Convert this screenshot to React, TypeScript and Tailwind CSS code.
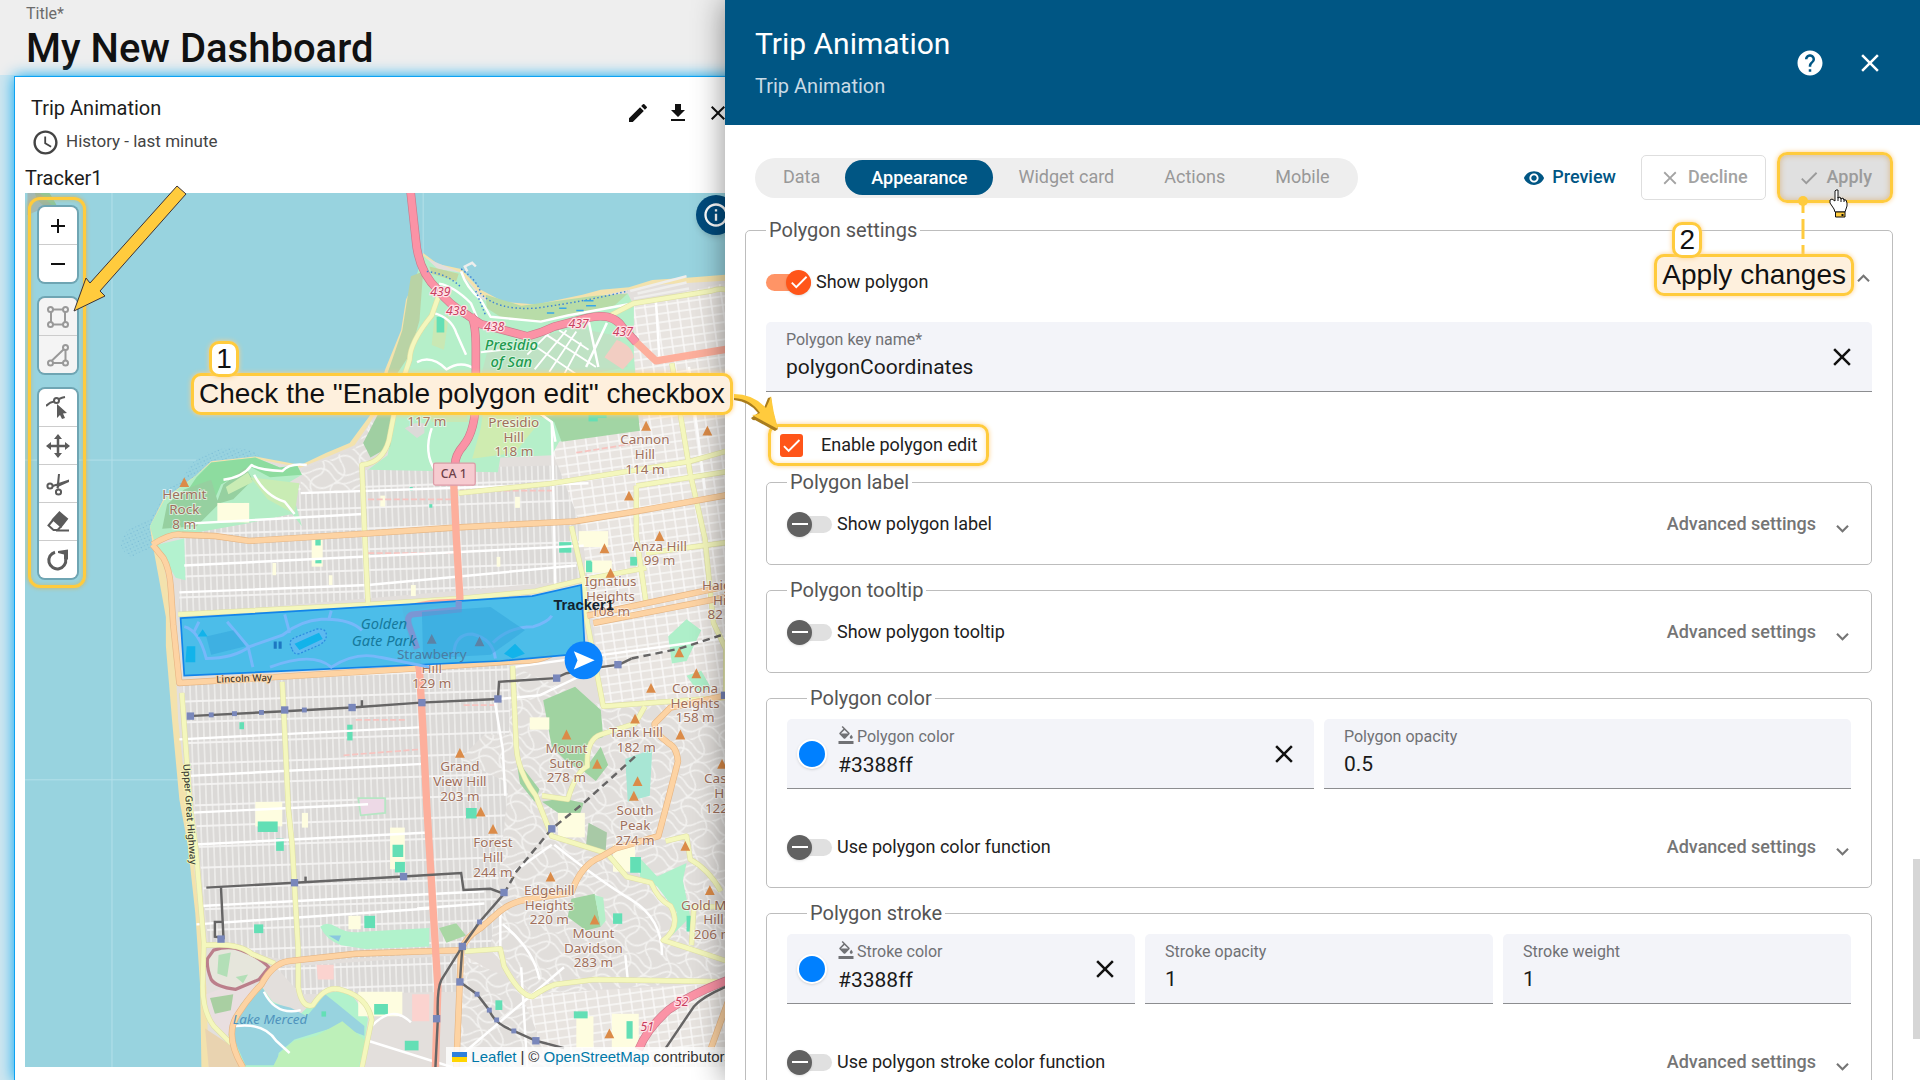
import type { ReactNode } from "react";
import { clsx } from "clsx";
import {
    MdAccessTime,
    MdCheck,
    MdClose,
    MdEdit,
    MdExpandLess,
    MdExpandMore,
    MdFileDownload,
    MdFormatColorFill,
    MdHelp,
    MdInfoOutline,
    MdRemoveRedEye,
} from "react-icons/md";

/* ── Map data ── */

type MapLabel = { x: number; y: number; lines: string[] };

const HILLS: MapLabel[] = [
    { x: 150, y: 408, lines: ["Hermit", "Rock", "8 m"] },
    { x: 348, y: 348, lines: ["117 m"] },
    { x: 419, y: 349, lines: ["Presidio", "Hill", "118 m"] },
    { x: 526, y: 363, lines: ["Cannon", "Hill", "114 m"] },
    { x: 538, y: 450, lines: ["Anza Hill", "99 m"] },
    { x: 498, y: 479, lines: ["Ignatius", "Heights", "108 m"] },
    { x: 352, y: 538, lines: ["Strawberry", "Hill", "129 m"] },
    { x: 567, y: 566, lines: ["Corona", "Heights", "158 m"] },
    { x: 519, y: 602, lines: ["Tank Hill", "182 m"] },
    { x: 462, y: 615, lines: ["Mount", "Sutro", "278 m"] },
    { x: 375, y: 630, lines: ["Grand", "View Hill", "203 m"] },
    { x: 591, y: 640, lines: ["Castro", "Hill", "122 m"] },
    { x: 518, y: 666, lines: ["South", "Peak", "274 m"] },
    { x: 402, y: 692, lines: ["Forest", "Hill", "244 m"] },
    { x: 448, y: 731, lines: ["Edgehill", "Heights", "220 m"] },
    { x: 484, y: 766, lines: ["Mount", "Davidson", "283 m"] },
    { x: 582, y: 743, lines: ["Gold Mine", "Hill", "206 m"] },
    { x: 590, y: 482, lines: ["Haight", "Hill", "82 m"] },
];

const PEAKS = [
    [150, 394], [527, 348], [577, 352], [513, 405], [493, 448], [498, 468], [538, 438],
    [554, 533], [568, 550], [531, 562], [518, 587], [555, 600],
    [462, 600], [487, 624], [375, 615], [520, 638], [517, 650], [589, 624], [392, 663],
    [402, 677], [449, 716], [485, 751], [559, 691], [579, 727], [497, 844],
];

const STATIONS = [
    [155, 585], [232, 580], [287, 578], [344, 574], [406, 571], [454, 554], [504, 543],
    [240, 721], [329, 716], [411, 729], [180, 767], [377, 773], [375, 802], [356, 832],
    [437, 850], [450, 677], [591, 568],
];

const STOPS = [
    [172, 584], [191, 583], [213, 582], [248, 580], [391, 753], [389, 812], [399, 825],
    [405, 833], [419, 842],
];

const SCHOOLS = [
    [257, 440, 7, 8], [257, 456, 8, 6], [334, 398, 4, 4], [350, 412, 4, 4], [456, 443, 16, 12],
    [478, 459, 8, 12], [514, 455, 9, 10], [486, 336, 14, 8], [210, 671, 26, 12], [225, 685, 10, 14],
    [320, 690, 14, 14], [322, 704, 13, 12], [207, 755, 12, 10], [297, 748, 14, 14], [305, 820, 18, 12],
    [330, 850, 18, 11], [468, 826, 18, 8], [511, 834, 8, 20], [404, 817, 9, 11], [514, 700, 14, 18],
    [500, 746, 12, 12], [380, 660, 14, 12], [283, 592, 7, 18], [195, 590, 6, 8], [560, 748, 8, 18],
    [356, 259, 10, 18], [480, 338, 12, 9], [262, 826, 6, 6], [478, 458, 7, 12],
];

const YELLOW_BLOCKS = [
    [177, 411, 26, 16], [254, 441, 9, 22], [472, 434, 24, 13], [477, 458, 22, 10], [208, 655, 22, 20],
    [318, 676, 12, 34], [284, 748, 10, 11], [292, 810, 36, 20], [499, 828, 22, 30], [470, 830, 14, 26],
    [500, 690, 18, 22], [432, 586, 16, 10], [455, 664, 22, 20], [246, 664, 5, 12], [310, 405, 4, 9],
    [268, 470, 3, 8], [335, 478, 4, 9], [222, 460, 3, 10], [420, 406, 4, 9], [405, 455, 3, 8],
];

const RED_ROADS = [
    "M370 396 L372 438 L375 489 L374 492 L353 493 L331 497 Q334 515 342 547 L345 599 L348 659 L351 708 L355 773 L357 806 L355 872",
    "M517 278 L535 295 L602 284",
];

const PINK_ROADS = [
    "M334 150 L339 196 Q341 222 357 237 Q366 249 380 257 L392 265 L430 275 Q442 272 452 267 L479 260 Q500 255 508 268 L519 280",
    "M384 258 Q388 264 388 285 L388 324 Q388 352 378 364 Q371 372 371 380",
    "M606 796 Q566 810 545 825 Q528 840 521 857",
];

const ORANGE_ROADS = [
    "M124 445 Q140 435 148 437 L175 438 L203 442 L298 436 L372 431 L469 426 L518 418 L602 403",
    "M124 445 L133 456 Q138 465 139 480 L141 510 L146 558 L227 553 L340 546 L421 540 Q442 540 450 534",
    "M479 503 L602 477",
    "M484 509 L602 486",
    "M198 872 Q182 845 194 828 Q203 814 213 804 Q222 787 235 785 L290 779 L376 776",
    "M372 872 L376 776 Q380 765 392 758 L408 744 Q418 736 434 734 L466 729 Q474 706 490 700 L502 693 L537 683 L545 653 L553 622 Q552 610 545 607 Q533 598 534 591 L547 578 L602 566",
    "M596 812 L580 856",
];

const YELLOW_ROADS = [
    "M145 502 L298 494 L376 489 L437 483 L474 474 L527 464",
    "M359 238 L352 258 Q334 280 334 294 L324 324 L317 360 Q312 378 295 380 L297 430 L300 493",
    "M374 403 L450 395 L563 377 L602 366",
    "M519 397 L602 384",
    "M548 297 L563 387 L575 440 L582 509 L592 530 L592 569",
    "M519 397 L519 438 L527 493",
    "M466 430 L476 474 L479 509 L492 577 L602 569",
    "M527 452 L602 442",
    "M230 557 L235 661 L238 689 L243 776 L243 806 Q246 824 255 821 Q266 803 280 809 Q300 815 303 833 L295 872",
    "M148 566 L155 661 L159 689 L166 770 L165 806 Q165 826 174 838 L188 852",
    "M167 772 Q195 770 205 779 L224 787",
    "M379 777 L408 775 L411 789 Q424 813 434 814 Q446 806 453 804 L485 800 L602 802",
    "M418 544 L421 610 Q422 630 437 650 L450 683 L495 697 L511 716 L531 721 Q537 735 547 740 Q556 757 541 768 L566 776 L602 788",
    "M442 650 L463 653 Q470 630 479 626 Q478 604 490 600 L518 591 L526 577",
    "M543 687 L560 683 L563 702 Q578 710 588 728",
    "M602 244 Q594 233 580 238 L517 248 L494 260",
    "M602 740 L566 741 L564 772",
];

const WHITE_ROADS = [
    "M151 428 L296 420", "M245 403 L480 395", "M150 462 L476 446", "M146 484 L300 478 L470 462",
    "M250 380 Q236 378 230 385 Q210 384 205 380 Q198 390 182 392", "M207 388 Q216 405 232 410 L240 420",
    "M407 571 L440 568 L478 550", "M146 604 L345 594", "M150 634 L345 624", "M152 664 L300 657",
    "M155 690 L350 680", "M160 755 L350 742", "M163 740 L395 728", "M340 742 L395 738",
    "M408 775 L408 745", "M403 570 L410 612 L412 650", "M450 345 L453 480",
    "M419 712 L450 690", "M340 296 Q352 290 364 302 Q376 294 388 302", "M354 256 Q368 260 372 272 L380 290",
    "M352 350 Q345 370 355 385", "M452 690 Q490 720 515 735 Q540 750 540 780",
    "M410 755 Q435 775 440 800", "M510 780 L512 800", "M215 810 Q225 830 245 825",
    "M303 838 Q320 820 335 835", "M376 222 Q380 235 392 245 L400 259 L441 263 L463 258 L517 248",
    "M418 545 L602 520", "M370 872 L300 850", "M358 232 Q370 234 384 248 L390 262",
    "M562 300 L575 400", "M453 361 L450 345 L436 335", "M425 790 L430 872", "M378 860 L460 790",
    "M192 838 Q215 835 225 850 L236 860", "M535 246 L538 296", "M480 262 L488 300 M495 264 L478 300",
];

const RAIL = [
    "M153 585 L232 581 L287 578 L343 574 L406 571 L407 557 L453 554 L462 550 L490 545 L505 543 L515 538",
    "M168 725 L240 721 L329 716 L376 713 L378 727 L400 726 L411 730 L391 753 L377 773 L360 800 Q356 808 357 832 L355 872",
    "M180 725 L182 766 L175 765 L175 753 L181 753",
    "M377 773 L375 802 L389 812 L399 825 Q403 836 419 842 L437 850 L460 856",
    "M295 578 L295 572",
    "M249 721 L249 716",
    "M602 802 Q575 812 566 822 L543 856",
];

const TUNNELS = ["M411 730 L421 712 L450 677 L476 656 L518 618", "M515 538 L554 530 L588 519"];

/* ── Map drawing ── */

function MapCanvas() {
    return (
        <svg
            className="absolute inset-0 h-full w-full font-['Noto_Sans','Open_Sans',sans-serif]"
            viewBox="20 158 582 714"
            preserveAspectRatio="xMinYMin slice"
            role="img"
            aria-label="Map of San Francisco"
        >
            <defs>
                <pattern id="avenues" width="5" height="17" patternUnits="userSpaceOnUse" patternTransform="rotate(-2)">
                    <rect width="5" height="17" fill="#f4f3f2" />
                    <rect x="0.5" y="0.8" width="4" height="15.4" fill="#dbd9d7" />
                </pattern>
                <pattern id="blocks" width="9" height="7" patternUnits="userSpaceOnUse" patternTransform="rotate(-8)">
                    <rect width="9" height="7" fill="#faf9f8" />
                    <rect x="0.6" y="0.6" width="7.8" height="5.8" fill="#e8e4e0" />
                </pattern>
                <pattern id="curves" width="34" height="30" patternUnits="userSpaceOnUse" patternTransform="rotate(14)">
                    <rect width="34" height="30" fill="#e1dedb" />
                    <path
                        d="M0 5 Q9 -3 17 5 T34 5 M0 12 Q9 4 17 12 T34 12 M0 20 Q9 28 17 20 T34 20 M0 27 Q9 35 17 27 T34 27 M5 0 Q13 9 5 15 T5 30 M22 0 Q30 8 22 15 T22 30"
                        fill="none"
                        stroke="#f3f2f0"
                        strokeWidth="1.3"
                    />
                </pattern>
                <pattern id="shoal" width="4" height="4" patternUnits="userSpaceOnUse" patternTransform="rotate(20)">
                    <circle cx="1" cy="1" r="0.5" fill="#6db2d2" />
                    <circle cx="3" cy="3" r="0.4" fill="#6db2d2" />
                </pattern>
            </defs>

            {/* Water */}
            <rect x="20" y="150" width="600" height="740" fill="#98d3df" />
            <path d="M91 150 V872 M345 150 V230 M20 376 H160 M20 637 H145" stroke="#b4e0e9" strokeWidth="0.8" />
            <path d="M28 158 H40 L47 170 L40 172 L30 164 Z" fill="#8cc79b" />
            <path d="M22 158 H32 L46 172 L36 170 L22 176 Z" fill="#a9a89c" fillOpacity="0.6" />
            <path d="M158 385 L136 400 L122 425 Q102 428 98 445 Q104 460 112 452 L124 448 L124 425 Z" fill="url(#shoal)" />
            <path d="M150 388 Q162 366 190 366 L205 368 L212 373 L160 392 Z" fill="url(#shoal)" />

            {/* Land */}
            <path
                d="M345 207 L357 216 L376 220 L392 237 L411 247 L437 249 L475 241 L490 237 L513 235 L532 229 L563 227 L602 224 V872 H164 L163 806 L159 746 L153 691 L146 653 L140 588 L135 528 L135 504 L129 471 L124 444 L122 430 L133 408 L159 389 L172 377 L208 373 L245 380 L266 370 L285 362 L305 335 L314 302 L327 270 L331 245 L340 226 Z"
                fill="#f3e2ad"
            />
            <path
                d="M347 211 L376 223 L392 241 L411 252 L475 245 L532 233 L602 229 V872 H170 L168 806 L162 746 L152 653 L145 588 L141 504 L134 465 L128 444 L140 408 L208 375 L245 382 L270 372 L289 364 L309 335 L330 270 Z"
                fill="#e3dfdc"
            />
            <path d="M150 436 L245 396 L300 384 L470 380 L474 474 L145 502 Z" fill="url(#avenues)" />
            <path d="M148 556 L415 542 L418 640 L400 776 L243 786 L170 772 Z" fill="url(#avenues)" />
            <path d="M225 790 L376 780 L375 810 L245 812 Z" fill="url(#avenues)" />
            <path d="M448 362 L525 345 L510 250 L602 229 V572 L492 577 L474 430 Z" fill="url(#blocks)" />
            <path d="M245 384 L290 366 L305 340 L316 370 L296 382 L297 400 L245 404 Z" fill="url(#curves)" />
            <path d="M418 544 L492 577 L602 569 V800 L434 812 L400 776 L415 640 L375 620 L395 600 L415 600 Z" fill="url(#curves)" />
            <path d="M378 780 L434 812 L602 802 V872 H372 Z" fill="url(#blocks)" />
            <path d="M380 785 L420 800 L450 872 L372 872 Z" fill="url(#curves)" />

            {/* Parks and woods */}
            <path
                d="M345 209 L357 220 L376 223 L392 244 L411 253 L437 254 L475 248 L512 240 L517 250 L517 290 L521 345 L456 361 L450 372 L408 374 L406 386 L300 384 L316 372 L325 322 L316 305 L330 270 L333 245 Z"
                fill="#b5efc9"
            />
            <path d="M396 241 L425 250 L484 242 L512 240 L501 250 L463 258 L441 263 L408 259 L397 252 Z" fill="#b8dca8" />
            <path d="M350 218 L374 224 L372 230 L352 224 Z" fill="#c3d7a0" />
            <path d="M335 226 L345 222 L342 262 L334 290 L322 308 L316 305 L328 270 Z" fill="#b9d3a5" />
            <path d="M310 335 L324 318 L318 365 L302 374 L296 362 Z" fill="#a0cfa2" />
            <path d="M440 340 L520 335 L522 352 L458 361 L452 345 Z" fill="#a2d5a4" />
            <path d="M352 345 L382 345 L378 330 L350 330 Z M354 262 L366 258 L362 286 L352 282 Z" fill="#c9e8b4" />
            <path d="M395 330 L440 345 L420 370 L385 375 L392 350 Z" fill="#cfecb0" />
            <path d="M398 285 L432 277 L470 268 L505 275 L512 300 L480 306 L392 308 Z" fill="#bfe2c4" />
            <path d="M430 290 L448 272 M436 302 L462 270 M448 304 L470 271 M460 306 L474 280 M432 280 L470 306 M446 274 L486 300 M456 270 L480 286 M392 288 L430 284" stroke="#fff" strokeWidth="1.5" fill="none" />
            <path d="M503 278 Q515 282 517 292 L508 302 L493 292 Z" fill="#f2cdc2" />
            <path d="M338 346 H346 V354 L340 358 L330 350 Z" fill="#dcdad8" />
            <path
                d="M172 378 L208 374 L228 382 L242 380 L246 388 L236 394 L246 430 L238 420 L200 428 L150 437 L126 444 L122 430 L134 408 L158 390 Z"
                fill="#b3edc6"
            />
            <path d="M172 378 L208 374 L228 382 L242 380 L246 388 L220 390 L205 382 L180 396 L174 410 L150 405 L160 390 Z" fill="#8ddc9f" />
            <path d="M182 396 L200 382 L206 392 L190 408 L176 412 Z M150 400 L172 392 L178 412 L160 430 L132 432 L136 412 Z" fill="#96d0a0" />
            <path d="M204 390 L244 395 L240 420 L218 408 Z M184 398 L202 386 L206 394 L186 404 Z" fill="#c9ecb4" />
            <path d="M124 446 L150 440 L151 474 L143 472 L136 460 Z" fill="#b3f2cf" />
            <path d="M189 411 H199 V427 H189 Z" fill="#8fe0b0" />
            <path d="M443 572 L469 561 L490 580 L492 602 L480 606 L476 631 L462 622 L450 610 Z" fill="#a0d3a1" />
            <path d="M476 630 L490 610 L496 625 L486 638 Z M421 620 L440 645 L436 655 L424 640 Z" fill="#a0d3a1" />
            <path d="M442 655 L458 652 L476 656 L470 674 Z" fill="#9fd0a0" />
            <path d="M545 520 L560 506 L572 515 L560 540 L548 542 Z M560 552 L572 548 L580 562 L570 566 Z" fill="#aeefc9" />
            <path d="M510 620 L532 612 L530 650 L512 655 Z" fill="#a8e6d4" />
            <path d="M466 734 L485 730 L490 757 L478 760 L463 749 Z" fill="#a0d3a1" />
            <path d="M485 731 L492 733 L494 752 L490 757 Z" fill="#b5efc9" />
            <path d="M521 700 L536 716 L560 705 L557 719 L563 749 L544 768 L552 745 L536 724 L522 716 Z" fill="#aef1cb" />
            <path d="M480 672 L495 680 L494 695 L478 690 Z" fill="#a8c9a6" />
            <path d="M261 757 Q266 752 274 757 Q284 763 295 761 L350 758 V773 L298 775 L278 772 Q266 768 261 757 Z" fill="#b1f2cc" />
            <path d="M268 764 L278 764 L276 769 Z" fill="#8ac7e0" />
            <path d="M358 758 L372 754 L380 764 L364 770 Z" fill="#a9d7a4" />
            <path d="M292 652 H314 V664 L294 666 Z" fill="#edd9e6" stroke="#b6e6c4" strokeWidth="1.5" />
            <path d="M258 788 H272 V800 H259 Z M336 812 H350 V834 H336 Z" fill="#fbd3cf" />
            <path d="M168 812 L200 800 L208 806 L192 830 L188 850 L172 835 Z" fill="#e9dfe0" />
            <path d="M171 815 L190 812 L188 825 L175 828 Z" fill="#a9cfa2" />
            <path d="M167 840 L190 855 L196 872 H170 Z" fill="#e9d3b0" />

            {/* Lake Merced and the golf course */}
            <path d="M196 872 L186 845 L196 820 L212 804 L222 818 L245 828 L262 812 L284 808 L300 832 L294 872 Z" fill="#b1f2cc" />
            <path
                d="M214 807 L221 819 L237 823 L250 830 L265 812 L275 820 L297 838 L297 846 L276 838 L256 844 L240 849 L227 860 L226 870 L200 870 L189 845 L196 825 Z"
                fill="#98d3df"
            />
            <path d="M240 850 L258 846 L279 834 L298 850 L292 872 H222 L228 860 Z" fill="#bdf0b9" />
            <path
                d="M174 776 Q187 772 196 776 Q212 782 219 790 L211 800 L192 808 Q176 806 172 800 Q168 790 169 783 Z"
                fill="#e6e6dc"
                stroke="#bb7f8b"
                strokeWidth="2.6"
            />
            <path d="M178 780 L188 778 L185 798 L177 795 Z M192 798 L202 796 L198 803 Z" fill="#b3dfb7" />

            {YELLOW_BLOCKS.map(([x, y, w, h]) => (
                <rect key={`${x}-${y}`} x={x} y={y} width={w} height={h} fill="#fefde0" />
            ))}
            {SCHOOLS.map(([x, y, w, h]) => (
                <rect key={`${x}-${y}`} x={x} y={y} width={w / 1.6} height={h / 1.4} fill="#63dfb5" />
            ))}
            <path d="M300 408 H370 M300 452 H370 M376 401 H450 M470 370 L520 362 M290 588 H330 M378 576 H404 M280 617 L344 612" stroke="#f7c4c0" strokeWidth="1.4" strokeDasharray="5 2" />

            {/* Roads */}
            <g fill="none" strokeLinejoin="round">
                {WHITE_ROADS.map((d) => (
                    <path key={d} d={d} stroke="#ffffff" strokeWidth="2" />
                ))}
                {YELLOW_ROADS.map((d) => (
                    <path key={d} d={d} stroke="#dfe0a4" strokeWidth="4.4" />
                ))}
                {YELLOW_ROADS.map((d) => (
                    <path key={d} d={d} stroke="#f4f7bd" strokeWidth="3.5" />
                ))}
                {ORANGE_ROADS.map((d) => (
                    <path key={d} d={d} stroke="#e6b583" strokeWidth="5.2" />
                ))}
                {ORANGE_ROADS.map((d) => (
                    <path key={d} d={d} stroke="#fdd3a3" strokeWidth="4.2" />
                ))}
                {RED_ROADS.map((d) => (
                    <path key={d} d={d} stroke="#fdaf9c" strokeWidth="6" />
                ))}
                {PINK_ROADS.map((d) => (
                    <path key={d} d={d} stroke="#c9798b" strokeWidth="7" />
                ))}
                {PINK_ROADS.map((d) => (
                    <path key={d} d={d} stroke="#fb93a6" strokeWidth="6" />
                ))}
            </g>
            <path d="M348 222 Q365 224 376 235 M376 220 Q390 230 392 240 Q405 254 437 252 Q480 246 512 238 M388 238 L396 258" fill="none" stroke="#3f83d6" strokeWidth="1.2" strokeDasharray="1.2 2" />
            <path d="M381 222 L379 218 L385 215 L388 218 M514 238 L560 226 M520 240 L560 231 M517 244 L562 236" fill="none" stroke="#efeeec" strokeWidth="2" />
            <path d="M476 246 H484 M478 250 H486 M456 252 H462 M446 256 H452 M470 254 H476" stroke="#39a7e8" strokeWidth="1.2" />

            {/* Rail */}
            <g fill="none" stroke="#666565" strokeWidth="2">
                {RAIL.map((d) => (
                    <path key={d} d={d} />
                ))}
                {TUNNELS.map((d) => (
                    <path key={d} d={d} strokeDasharray="6 4" />
                ))}
            </g>
            {STATIONS.map(([x, y]) => (
                <rect key={`${x}-${y}`} x={x - 3} y={y - 3} width="6" height="6" fill="#7987bb" />
            ))}
            {STOPS.map(([x, y]) => (
                <rect key={`${x}-${y}`} x={x - 2} y={y - 2} width="4" height="4" fill="#7987bb" />
            ))}

            {/* Place names */}
            {PEAKS.map(([x, y]) => (
                <path key={`${x}-${y}`} d={`M${x} ${y - 4} L${x + 4} ${y + 4} H${x - 4} Z`} fill="#db8b48" />
            ))}
            <g fill="#a0705c" fontSize="11" textAnchor="middle" stroke="#ffffff" strokeOpacity="0.6" strokeWidth="1.6" paintOrder="stroke">
                {HILLS.map((hill) =>
                    hill.lines.map((line, i) => (
                        <text key={line + hill.x} x={hill.x} y={hill.y + i * 12}>
                            {line}
                        </text>
                    )),
                )}
            </g>
            <g fill="#229a50" fontSize="12" fontStyle="italic" fontWeight="500" textAnchor="middle" stroke="#d8f5e0" strokeWidth="1.5" paintOrder="stroke">
                <text x="417" y="286">Presidio</text>
                <text x="417" y="300">of San</text>
            </g>
            <g fill="#c8405f" fontSize="10" fontStyle="italic" textAnchor="middle" stroke="#ffe3e8" strokeWidth="2" paintOrder="stroke">
                <text x="359" y="242">439</text>
                <text x="372" y="258">438</text>
                <text x="403" y="271">438</text>
                <text x="472" y="268">437</text>
                <text x="508" y="275">437</text>
                <text x="556" y="822">52</text>
                <text x="528" y="842">51</text>
            </g>
            <rect x="353.500" y="378.500" width="34" height="18" rx="1.500" fill="#f6cbd0" stroke="#dc9aa6" />
            <text x="370" y="391" fontSize="10" fontWeight="500" textAnchor="middle" fill="#6d4048">CA 1</text>
            <text x="220" y="836" fontSize="11" fontStyle="italic" textAnchor="middle" fill="#4f93bd">Lake Merced</text>
            <text x="199" y="557" fontSize="8" fontWeight="500" textAnchor="middle" fill="#45382c" transform="rotate(-2 199 557)" stroke="#fdd9ad" strokeWidth="1.5" paintOrder="stroke">
                Lincoln Way
            </text>
            <text x="148" y="625" fontSize="8" fontWeight="500" fill="#3f3f35" transform="rotate(86 149 625)" stroke="#f4f7bd" strokeWidth="1.5" paintOrder="stroke">
                Upper Great Highway
            </text>

            {/* Tracked polygon */}
            <path
                d="M147 505 L330 494 L434 487 L474 478 L477 532 L463 535 L408 540 L150 552 Z"
                fill="#41bae9"
                fillOpacity="0.93"
                stroke="#1285ea"
                strokeWidth="1.4"
            />
            <g fill="none" stroke="#77b8fa" strokeWidth="2.4">
                <path d="M150 512 Q162 515 168 538 Q190 538 204 528 L230 519 Q245 507 262 506 Q285 505 295 515" />
                <path d="M185 508 L202 528 L206 545 M162 508 L158 516 M232 502 L236 517 M270 499 L268 506" />
                <path d="M220 545 Q255 532 270 545 Q290 532 310 537 L350 545" />
                <path d="M370 536 Q370 518 385 518 Q402 522 404 538 M402 525 Q415 512 435 512 Q447 508 450 503" />
            </g>
            <path d="M374 491 L374 498 L336 502 Q330 504 335 515 L340 530" fill="none" stroke="#7b96d4" strokeWidth="5" />
            <path d="M344 500 L400 496 L428 515 L400 535 L345 538 Z M168 520 L190 515 L200 528 L172 535 Z" fill="#2fa3dc" fillOpacity="0.5" />
            <path d="M238 530 Q234 524 240 521 L258 514 Q266 513 266 519 Q266 524 260 527 L244 534 Q239 535 238 530 Z" fill="#5cb9f0" stroke="#2b8be0" strokeDasharray="1.5 1.5" />
            <path d="M240 526 L260 517 L263 522 L244 531 Z" fill="#12b3ea" />
            <path d="M152 528 H159 V541 H151 Z M411 534 L420 526 L428 534 L418 538 Z M161 520 L165 514 L169 520 Z" fill="#12b3ea" />
            <path d="M223 524 h2.500 v6 h-2.500 z M227 524 h2.500 v6 h-2.500 z" fill="#1d78c2" />
            <path d="M352 518 L356 526 H348 Z M391 520 L395 528 H387 Z" fill="#5c82a5" />
            <g fill="#16799c" fontSize="12" fontStyle="italic" textAnchor="middle">
                <text x="313" y="514">Golden</text>
                <text x="313" y="528">Gate Park</text>
            </g>
            <text x="352" y="538" fontSize="11" textAnchor="middle" fill="#4b7da3">Strawberry</text>

            {/* Tracker marker */}
            <text x="476" y="498" fontSize="12" fontWeight="700" textAnchor="middle" fill="#12222e" className="font-['Liberation_Sans',Arial,sans-serif]">
                Tracker1
            </text>
            <circle cx="476" cy="539.500" r="15.500" fill="#0b83fd" />
            <path d="M468 532 L485 539.500 L468 547 L471 539.500 Z" fill="#ffffff" />
        </svg>
    );
}

/* ── Map toolbar ── */

function ToolGroup({ children }: { children: ReactNode }) {
    return (
        <div className="flex flex-col gap-px overflow-hidden rounded-md bg-[#ccc] ring-2 ring-[#6fa5b3]">
            {children}
        </div>
    );
}

function ToolButton({ label, disabled, children }: { label: string; disabled?: boolean; children: ReactNode }) {
    return (
        <button
            type="button"
            aria-label={label}
            disabled={disabled}
            className={clsx(
                "flex h-[37px] w-[38px] items-center justify-center",
                disabled ? "bg-[#f4f4f4] text-[#999]" : "bg-white text-[#5b5b5b]",
            )}
        >
            <svg className="h-6 w-6" viewBox="0 0 24 24" fill="none" stroke="currentColor" strokeWidth="2">
                {children}
            </svg>
        </button>
    );
}

function MapToolbar() {
    return (
        <div className="absolute top-1 left-[3px] flex flex-col gap-4 rounded-xl border-3 border-[#ffcb3d] py-[7px] pr-[6px] pl-2 shadow-[0_0_4px_#d8b45a,inset_0_0_4px_#b9bf8a]">
            <ToolGroup>
                <ToolButton label="Zoom in">
                    <path d="M12 5 V19 M5 12 H19" stroke="#111" />
                </ToolButton>
                <ToolButton label="Zoom out">
                    <path d="M5 12 H19" stroke="#111" />
                </ToolButton>
            </ToolGroup>
            <ToolGroup>
                <ToolButton label="Draw rectangle" disabled>
                    <path d="M7 4.500 H17 M7 19.500 H17 M5 7 V17 M19 7 V17" />
                    <circle cx="4.500" cy="4.500" r="2.500" />
                    <circle cx="19.500" cy="4.500" r="2.500" />
                    <circle cx="4.500" cy="19.500" r="2.500" />
                    <circle cx="19.500" cy="19.500" r="2.500" />
                </ToolButton>
                <ToolButton label="Draw polygon" disabled>
                    <path d="M6 17.500 L17.500 6.500 M19.500 7 V17 M7 20 H17" />
                    <circle cx="4.500" cy="20" r="2.500" />
                    <circle cx="19.500" cy="4.500" r="2.500" />
                    <circle cx="19.500" cy="20" r="2.500" />
                </ToolButton>
            </ToolGroup>
            <ToolGroup>
                <ToolButton label="Edit layers">
                    <path d="M0 10 Q4 6 8 5.500 M13 3 Q16 1.500 19 1" />
                    <circle cx="10.500" cy="4.500" r="2.500" />
                    <path d="M11 8 V22 L14 19 L16 23 L19 22 L17 17.500 L21 17 Z" fill="currentColor" stroke="none" />
                </ToolButton>
                <ToolButton label="Drag layers">
                    <path d="M12 4 V20 M4 12 H20" strokeWidth="2.500" />
                    <path d="M12 0 L16 5 H8 Z M12 24 L16 19 H8 Z M0 12 L5 8 V16 Z M24 12 L19 8 V16 Z" fill="currentColor" stroke="none" />
                </ToolButton>
                <ToolButton label="Cut layers">
                    <circle cx="4" cy="14" r="2.600" />
                    <circle cx="12.500" cy="20" r="2.600" />
                    <path d="M6.500 13 L23 7.500 L23 10 L13 14.500 L12.500 17 L10.500 16 L12 2 L14 2 L13 13 L7 15 Z" fill="currentColor" stroke="none" />
                </ToolButton>
                <ToolButton label="Remove layers">
                    <path d="M13.500 2.500 L21 9 L15 16.500 L7 9.500 Z" fill="currentColor" />
                    <path d="M7 10 L2.500 15.500 L7.500 20 H11.500 L15 16.500 M10 20.500 H23" />
                </ToolButton>
                <ToolButton label="Rotate layers">
                    <path d="M9 4.200 A8.500 8.500 0 1 0 19.700 11" strokeWidth="3" />
                    <path d="M12 3 L22 1.500 V11.500 H18 V6.500 L12 5 Z" fill="currentColor" stroke="none" />
                </ToolButton>
            </ToolGroup>
        </div>
    );
}

/* ── Dashboard behind the drawer ── */

function Dashboard() {
    return (
        <main className="flex w-[725px] shrink-0 flex-col overflow-hidden bg-[#cfe6ef]">
            <header className="h-[75px] shrink-0 bg-[#eee] pt-1 pl-[26px]">
                <p className="text-[16px] leading-5 text-[#6b6b6b]">Title*</p>
                <h1 className="text-[40px] leading-[50px] font-medium text-[#111]">My New Dashboard</h1>
            </header>

            <section className="mt-px -mr-6 ml-[14px] flex flex-1 flex-col border border-b-0 border-[#0ea2f2] bg-white px-[10px] shadow-[0_0_14px_#03a9f4]">
                <div className="flex pt-[18px] pl-1.5">
                    <div className="flex flex-1 flex-col">
                        <h2 className="text-[20px] leading-[26px] text-[#1c1c1c]">Trip Animation</h2>
                        <button type="button" className="flex h-[42px] items-center gap-1.5 text-[17px] text-[#444]">
                            <MdAccessTime className="size-[29px]" />
                            History - last minute
                        </button>
                    </div>
                    <div className="flex h-9 items-center gap-4 pr-2 text-[#111]">
                        <button type="button" aria-label="Edit widget">
                            <MdEdit className="size-6" />
                        </button>
                        <button type="button" aria-label="Download widget">
                            <MdFileDownload className="size-6" />
                        </button>
                        <button type="button" aria-label="Remove widget">
                            <MdClose className="size-6" />
                        </button>
                    </div>
                </div>
                <p className="text-[20px] leading-[30px] text-[#1c1c1c]">Tracker1</p>

                <div className="relative mb-[13px] flex-1 overflow-hidden">
                    <MapCanvas />
                    <MapToolbar />
                    <button
                        type="button"
                        aria-label="Map information"
                        className="absolute top-0.5 right-0.5 flex size-10 items-center justify-center rounded-full bg-[#004b7d] text-white shadow-md"
                    >
                        <MdInfoOutline className="size-7" />
                    </button>
                    <div className="absolute right-0 bottom-0 flex items-center gap-1 bg-white/80 px-1.5 font-['Liberation_Sans',Arial,sans-serif] text-[15px] leading-5 text-[#333]">
                        <svg className="h-[10px] w-[15px]" viewBox="0 0 15 10" aria-hidden="true">
                            <path d="M0 0 H15 V5 H0 Z" fill="#2e80dc" />
                            <path d="M0 5 H15 V10 H0 Z" fill="#ffd500" />
                        </svg>
                        <a href="#leaflet" className="text-[#0078a8]">Leaflet</a>
                        <span>|</span>
                        <span>
                            © <a href="#osm" className="text-[#0078a8]">OpenStreetMap</a> contributors
                        </span>
                    </div>
                </div>
            </section>
        </main>
    );
}

/* ── Form controls ── */

function Toggle({ id, label, on }: { id: string; label: string; on?: boolean }) {
    return (
        <label htmlFor={id} className="relative flex h-6 items-center gap-[5px] text-[18px] text-[#212121]">
            <input id={id} type="checkbox" role="switch" defaultChecked={on} className="peer sr-only" />
            <span
                className={clsx(
                    "flex h-[17px] w-[45px] items-center rounded-full",
                    on ? "justify-end bg-[#ff9466]" : "bg-[#e0e0e0]",
                )}
            >
                <span
                    className={clsx(
                        "flex size-[25px] items-center justify-center rounded-full text-white shadow",
                        on ? "bg-[#ff5519]" : "bg-[#616161]",
                    )}
                >
                    {on ? <MdCheck className="size-[22px]" /> : <span className="h-0.5 w-4 bg-white" />}
                </span>
            </span>
            <span className="pb-0.5">{label}</span>
        </label>
    );
}

function ClearButton({ label }: { label: string }) {
    return (
        <button type="button" aria-label={label} className="flex size-[60px] shrink-0 items-center justify-center text-[#111]">
            <MdClose className="size-[30px]" />
        </button>
    );
}

function Field({ id, label, value, clearable, swatch }: { id: string; label: string; value: string; clearable?: boolean; swatch?: boolean }) {
    return (
        <div className="flex h-[70px] min-w-0 flex-1 items-center rounded-t-[5px] border-b border-[#8c8d90] bg-[#f3f4f9]">
            {swatch && (
                <span className="ml-[10px] size-[30px] shrink-0 rounded-full border-2 border-white bg-[#0080ff] shadow" />
            )}
            <div className={clsx("flex min-w-0 flex-1 flex-col", swatch ? "pl-[11px]" : "pl-5")}>
                <label htmlFor={id} className="flex items-center gap-0.5 text-[16px] leading-5 text-[#707175]">
                    {swatch && <MdFormatColorFill className="mb-1 -ml-px size-[18px]" />}
                    {label}
                </label>
                <input id={id} defaultValue={value} className="h-[33px] w-full min-w-0 bg-transparent text-[21px] text-[#1a1a1a] outline-none" />
            </div>
            {clearable && <ClearButton label={`Clear ${label}`} />}
        </div>
    );
}

function ToggleRow({ id, label }: { id: string; label: string }) {
    return (
        <div className="flex h-6 items-center justify-between">
            <Toggle id={id} label={label} />
            <button type="button" className="-mr-1 flex items-center gap-[14px] text-[18px] font-medium text-[#757575]">
                <span className="pb-0.5">Advanced settings</span>
                <MdExpandMore className="mt-2 size-[25px]" />
            </button>
        </div>
    );
}

function Group({ title, wide, children }: { title: string; wide?: boolean; children: ReactNode }) {
    return (
        <fieldset
            className={clsx(
                "mb-[13px] flex min-w-0 flex-col gap-[46px] rounded-[5px] border border-[#bdbdbd] px-5 pb-7",
                wide ? "pt-[9px]" : "pt-[18px]",
            )}
        >
            <legend className={clsx("px-[3px] text-[20px] leading-6 text-[#555]", wide && "ml-5")}>{title}</legend>
            {children}
        </fieldset>
    );
}

/* ── Callouts ── */

function Callout({ step, className, children }: { step: number; className: string; children: ReactNode }) {
    return (
        <div className={clsx("absolute z-20 font-['Liberation_Sans',Arial,sans-serif] text-[28px] text-[#111]", className)}>
            <span className="relative z-10 -mb-1 ml-[18px] flex h-9 w-[30px] items-center justify-center rounded-[10px] border-3 border-[#ffcb3d] bg-white shadow-[0_0_5px_#ffcf87]">
                {step}
            </span>
            <p className="rounded-[10px] border-3 border-[#ffcb3d] bg-[#fef0dd] px-[5px] leading-9 whitespace-nowrap shadow-[0_0_5px_#ffcf87]">
                {children}
            </p>
        </div>
    );
}

function ArrowShapes() {
    return (
        <>
            <svg className="absolute top-[180px] left-[64px] z-20 h-[140px] w-[130px]" viewBox="64 180 130 140" aria-hidden="true">
                <path d="M177 186 L186 194 L100 291 L105 296 L74 311 L86 278 L90 283 Z" fill="#ffcb3d" stroke="#3b3338" strokeWidth="1" />
            </svg>
            <svg className="absolute top-[390px] left-[730px] z-20 h-[45px] w-[55px]" viewBox="730 390 55 45" aria-hidden="true">
                <path d="M751 418 Q753 421 755 420 L775 431 L778 429 Q772 412 771 397 L768 398 L764 408 Q752 396 734 395 V400 Q750 402 758 413 Z" fill="#a97c1c" />
                <path d="M752 415 Q757 415 760 413 Q751 399 734 398 V394 Q753 394 766 408 Q769 402 771 396 Q773 412 778 429 Z" fill="#ffcb3d" />
            </svg>
        </>
    );
}

/* ── Settings drawer ── */

const TABS = ["Data", "Appearance", "Widget card", "Actions", "Mobile"];

function Drawer() {
    return (
        <aside className="relative z-10 flex min-w-0 flex-1 flex-col bg-white shadow-[0_0_30px_rgba(0,0,0,0.45)]">
            <header className="flex h-[125px] shrink-0 items-center justify-between bg-[#005684] pr-[35px] pl-[30px] text-white">
                <div>
                    <h2 className="text-[30px] leading-[42px]">Trip Animation</h2>
                    <p className="pt-1 text-[20px] leading-[34px] text-[#c9dbe6]">Trip Animation</p>
                </div>
                <div className="flex items-center gap-[30px]">
                    <button type="button" aria-label="Help">
                        <MdHelp className="size-[30px]" />
                    </button>
                    <button type="button" aria-label="Close">
                        <MdClose className="size-[30px]" />
                    </button>
                </div>
            </header>

            <div className="flex shrink-0 items-center justify-between pt-[30px] pr-[30px] pl-[30px]">
                <nav className="flex h-10 items-center rounded-full bg-[#eee] px-[3px] text-[18px]">
                    {TABS.map((tab) => (
                        <button
                            key={tab}
                            type="button"
                            className={clsx(
                                "h-[35px] rounded-full",
                                tab === "Appearance"
                                    ? "bg-[#005684] px-[26px] font-medium text-white"
                                    : "px-[25px] pb-0.5 text-[#989898]",
                            )}
                        >
                            {tab}
                        </button>
                    ))}
                </nav>

                <div className="flex items-center text-[18px] font-medium">
                    <button type="button" className="mr-[25px] flex items-center gap-[7px] text-[#005684]">
                        <MdRemoveRedEye className="size-[22px]" />
                        <span className="pb-0.5">Preview</span>
                    </button>
                    <button type="button" className="flex h-[45px] items-center gap-[7px] rounded-[5px] border border-[#dedede] px-[17px] text-[#a3a3a3]">
                        <MdClose className="size-[22px]" />
                        <span className="pb-0.5">Decline</span>
                    </button>
                    <div className="relative ml-[14px]">
                        <button type="button" className="flex h-[45px] items-center gap-[7px] rounded-[5px] bg-[#e0e0e0] px-[18px] text-[#9b9b9b]">
                            <MdCheck className="size-[22px]" />
                            <span className="pb-0.5">Apply</span>
                        </button>
                        <div className="pointer-events-none absolute -inset-[3px] rounded-[10px] border-3 border-[#ffcb3d] shadow-[0_0_5px_#ffcf87,inset_0_0_6px_#d9b98a]" />
                        {/* Dashed leader and hand pointer */}
                        <svg className="absolute top-8 left-[14px] z-10 h-[70px] w-[60px]" viewBox="0 0 60 70" aria-hidden="true">
                            <circle cx="9" cy="14" r="5" fill="#ffcb3d" />
                            <path d="M9 14 V26 M9 32 V52 M9 58 V68" stroke="#ffcb3d" strokeWidth="3" />
                            <path d="M41 25 L40 22 L36 16 V13 L38 12 L41 14 V4 L42 3 H44 V11 L46 10 L47 12 L49 11 L50 13 L52 13 L53 16 V19 L51 25 Z" fill="#ffffff" stroke="#111" strokeWidth="1" />
                            <path d="M44 10 V14 M47 11 V15 M50 12 V15" stroke="#111" strokeWidth="1" />
                            <path d="M41.500 25 H51 V30 H41.500 Z" fill="#ffcb3d" stroke="#111" />
                            <path d="M47.500 27 H49.500 V29 H47.500 Z" fill="#111" />
                        </svg>
                    </div>
                </div>
            </div>

            <div className="flex min-h-0 flex-1 overflow-hidden">
                <form className="min-w-0 flex-1 pt-[18px] pr-5 pl-5">
                    <fieldset className="relative flex min-w-0 flex-col rounded-[5px] border border-[#bdbdbd] px-5 pt-5 pb-7">
                        <legend className="px-[3px] text-[20px] leading-6 text-[#555]">Polygon settings</legend>
                        <div className="flex h-10 items-center justify-between">
                            <Toggle id="show-polygon" label="Show polygon" on />
                            <button type="button" aria-label="Collapse polygon settings" className="-mr-1 pb-2 text-[#757575]">
                                <MdExpandLess className="size-[25px]" />
                            </button>
                        </div>
                        <div className="flex pt-5">
                            <Field id="polygon-key" label="Polygon key name*" value="polygonCoordinates" clearable />
                        </div>

                        <div className="mt-8 mb-1 flex">
                            <label
                                htmlFor="polygon-edit"
                                className="ml-0.5 flex h-[42px] items-center gap-[18px] rounded-[10px] border-3 border-[#ffcb3d] px-[9px] text-[18px] text-[#212121] shadow-[0_0_5px_#ffcf87,inset_0_0_5px_#ffe3b5]"
                            >
                                <input id="polygon-edit" type="checkbox" defaultChecked className="peer sr-only" />
                                <span className="flex size-[23px] items-center justify-center rounded-[3px] bg-[#ff5519] text-white">
                                    <MdCheck className="size-[23px]" />
                                </span>
                                <span className="pb-0.5">Enable polygon edit</span>
                            </label>
                        </div>

                        <Group title="Polygon label">
                            <ToggleRow id="show-label" label="Show polygon label" />
                        </Group>
                        <Group title="Polygon tooltip">
                            <ToggleRow id="show-tooltip" label="Show polygon tooltip" />
                        </Group>
                        <Group title="Polygon color" wide>
                            <div className="flex gap-[10px]">
                                <Field id="polygon-color" label="Polygon color" value="#3388ff" clearable swatch />
                                <Field id="polygon-opacity" label="Polygon opacity" value="0.5" />
                            </div>
                            <ToggleRow id="color-function" label="Use polygon color function" />
                        </Group>
                        <Group title="Polygon stroke" wide>
                            <div className="flex gap-[10px]">
                                <Field id="stroke-color" label="Stroke color" value="#3388ff" clearable swatch />
                                <Field id="stroke-opacity" label="Stroke opacity" value="1" />
                                <Field id="stroke-weight" label="Stroke weight" value="1" />
                            </div>
                            <ToggleRow id="stroke-function" label="Use polygon stroke color function" />
                        </Group>
                    </fieldset>
                </form>
                {/* Scrollbar */}
                <div className="flex w-[7px] flex-col" aria-hidden="true">
                    <div className="flex-1" />
                    <div className="mb-[41px] h-[180px] bg-[#d6d6d6]" />
                </div>
            </div>

            <Callout step={2} className="top-[222px] right-[66px]">
                Apply changes
            </Callout>
        </aside>
    );
}

export default function App() {
    return (
        <div className="relative flex h-screen overflow-hidden bg-white font-['Roboto',sans-serif]">
            <Dashboard />
            <Drawer />
            <Callout step={1} className="top-[341px] left-[191px]">
                Check the "Enable polygon edit" checkbox
            </Callout>
            <ArrowShapes />
        </div>
    );
}
